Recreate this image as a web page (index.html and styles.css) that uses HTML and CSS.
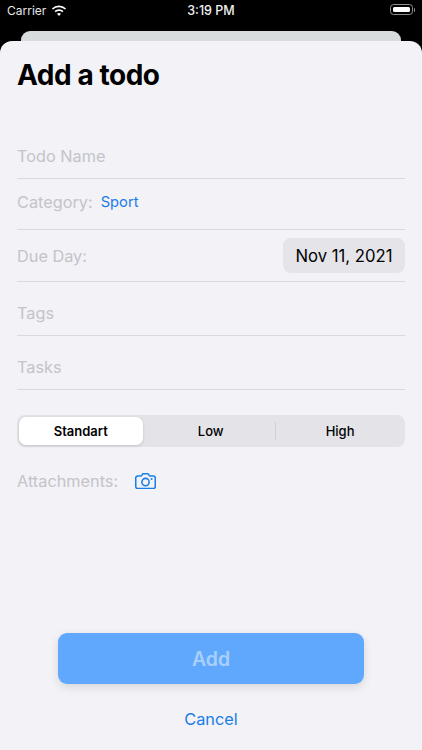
FILE: index.html
```html
<!DOCTYPE html>
<html lang="en">
<head>
<meta charset="utf-8">
<title>Add a todo</title>
<link rel="stylesheet" href="styles.css">
</head>
<body>
<div class="screen">
  <header class="status">
    <div class="status-left">
      <span>Carrier</span>
      <svg class="wifi" width="16" height="12" viewBox="0 0 16 12"><path d="M8 2.200c2.300 0 4.400.9 6 2.400l1.100-1.200A10.400 10.400 0 0 0 8 .5 10.400 10.400 0 0 0 .9 3.400L2 4.600a8.700 8.700 0 0 1 6-2.400Z" fill="#fff"/><path d="M8 5.900c1.300 0 2.400.5 3.300 1.300l1.200-1.200A6.500 6.500 0 0 0 8 4.200 6.500 6.500 0 0 0 3.500 6l1.200 1.200A4.800 4.800 0 0 1 8 5.900Z" fill="#fff"/><path d="M8 7.900c-.8 0-1.500.3-2 .8l2 2.300 2-2.300c-.5-.5-1.200-.8-2-.8Z" fill="#fff"/></svg>
    </div>
    <div class="status-time">3:19 PM</div>
    <div class="status-right">
      <div class="battery"><div class="battery-fill"></div></div>
      <div class="battery-cap"></div>
    </div>
  </header>
  <div class="back-card"></div>
  <main class="sheet">
    <h1 class="title">Add a todo</h1>
    <div class="row row-name"><span class="placeholder">Todo Name</span></div>
    <div class="row row-category"><span class="placeholder">Category:</span><span class="link">Sport</span></div>
    <div class="row row-due"><span class="placeholder">Due Day:</span><span class="date">Nov 11, 2021</span></div>
    <div class="row row-field"><span class="placeholder">Tags</span></div>
    <div class="row row-field"><span class="placeholder">Tasks</span></div>
    <div class="segments">
      <div class="segment selected">Standart</div>
      <div class="segment">Low</div>
      <div class="segment last">High</div>
    </div>
    <div class="attachments">
      <span class="placeholder">Attachments:</span>
      <svg class="camera" width="21" height="16" viewBox="0 0 23 17.500" fill="none"><path d="M3 3.300h3.200c.6 0 .9-.3 1.200-.8l.6-1c.2-.4.500-.6 1-.6h4.900c.5 0 .8.2 1 .6l.6 1c.3.5.6.8 1.200.8H20c1.300 0 2.200.9 2.200 2.200v9.300c0 1.300-.9 2.200-2.200 2.200H3c-1.300 0-2.200-.9-2.200-2.200V5.500c0-1.300.9-2.200 2.200-2.200Z" stroke="#1b7de6" stroke-width="1.700"/><circle cx="11.500" cy="9.900" r="4" stroke="#1b7de6" stroke-width="1.700"/><circle cx="18.200" cy="6.600" r="1.100" fill="#1b7de6"/></svg>
    </div>
    <button class="add" type="button">Add</button>
    <button class="cancel" type="button">Cancel</button>
  </main>
</div>
</body>
</html>
```
FILE: styles.css
```css
* {
  box-sizing: border-box;
  margin: 0;
  padding: 0;
}

html,
body {
  width: 422px;
  height: 750px;
  overflow: hidden;
  background: #000;
}

body {
  font-family: Inter, "Liberation Sans", sans-serif;
}

.screen {
  width: 422px;
  height: 750px;
  display: flex;
  flex-direction: column;
  background: #000;
}

.status {
  height: 31px;
  flex: none;
  display: grid;
  grid-template-columns: 1fr auto 1fr;
  align-items: start;
  padding: 3px 7px 0 7px;
  color: #fff;
  font-size: 12px;
  line-height: 16px;
}

.status-left {
  display: flex;
  align-items: center;
  gap: 5px;
  color: #e6e6e6;
}

.wifi {
  margin-top: -1px;
}

.status-time {
  font-size: 12.500px;
  font-weight: 500;
  color: #f0f0f0;
}

.status-right {
  display: flex;
  justify-content: flex-end;
  align-items: center;
  gap: 1px;
  padding-top: 1px;
}

.battery {
  width: 23px;
  height: 11px;
  padding: 2px;
  border: 1px solid #8e8e8e;
  border-radius: 3.500px;
}

.battery-fill {
  height: 100%;
  background: #fff;
  border-radius: 1.500px;
}

.battery-cap {
  width: 1.500px;
  height: 4px;
  background: #8e8e8e;
  border-radius: 0 1px 1px 0;
}

.back-card {
  height: 10px;
  flex: none;
  margin: 0 21px;
  background: #d8dcdc;
  border-radius: 9px 9px 0 0;
}

.sheet {
  flex: 1;
  display: flex;
  flex-direction: column;
  padding: 0 17px;
  background: #f2f2f7;
  border-radius: 12px 12px 0 0;
}

.title {
  margin-top: 16px;
  height: 36px;
  font-size: 28px;
  line-height: 36px;
  font-weight: 700;
  letter-spacing: -0.45px;
  color: #000;
}

.row {
  display: flex;
  align-items: center;
  flex: none;
  border-bottom: 1px solid #d9d9de;
  font-size: 17px;
  line-height: 22px;
}

.row-name {
  height: 45px;
  margin-top: 41px;
}

.row-category {
  height: 51px;
  gap: 8px;
  padding: 0 0 4px;
}

.row-due {
  height: 52px;
  justify-content: space-between;
}

.row-field {
  height: 54px;
  padding: 8px 0 0;
}

.placeholder {
  font-size: 16.300px;
  line-height: 22px;
  color: #c4c4c9;
}

.link {
  font-size: 14.700px;
  font-weight: 400;
  color: #1b7de6;
}

.date {
  width: 122px;
  height: 35px;
  display: flex;
  align-items: center;
  justify-content: center;
  background: #e4e4e9;
  border-radius: 8px;
  font-size: 16.700px;
  color: #000;
}

.segments {
  margin-top: 25px;
  height: 32px;
  flex: none;
  display: grid;
  grid-template-columns: repeat(3, 1fr);
  align-items: center;
  padding: 0 1px 0 0.500px;
  background: #e3e3e8;
  border-radius: 8px;
}

.segment {
  height: 28px;
  display: flex;
  align-items: center;
  justify-content: center;
  font-size: 13px;
  font-weight: 500;
  color: #000;
}

.segment.selected {
  margin: 0 3.300px 0 1px;
  background: #fff;
  border-radius: 7px;
  box-shadow: 0 1px 3px rgba(0, 0, 0, 0.14);
  font-weight: 600;
}

.segment.last {
  height: 18px;
  border-left: 1px solid #cfcfd4;
}

.attachments {
  margin-top: 23px;
  display: flex;
  align-items: center;
  gap: 17px;
  height: 22px;
}

.add {
  margin: auto 41px 0;
  height: 51px;
  flex: none;
  border: 0;
  border-radius: 9px;
  background: #60a8fd;
  box-shadow: 0 3px 10px rgba(0, 0, 0, 0.12);
  color: #a9d0fb;
  font-family: inherit;
  font-size: 19.500px;
  font-weight: 600;
}

.cancel {
  margin: 24px 0 20px;
  height: 22px;
  flex: none;
  border: 0;
  background: none;
  color: #1b7de6;
  font-family: inherit;
  font-size: 16.300px;
  line-height: 22px;
}
```
